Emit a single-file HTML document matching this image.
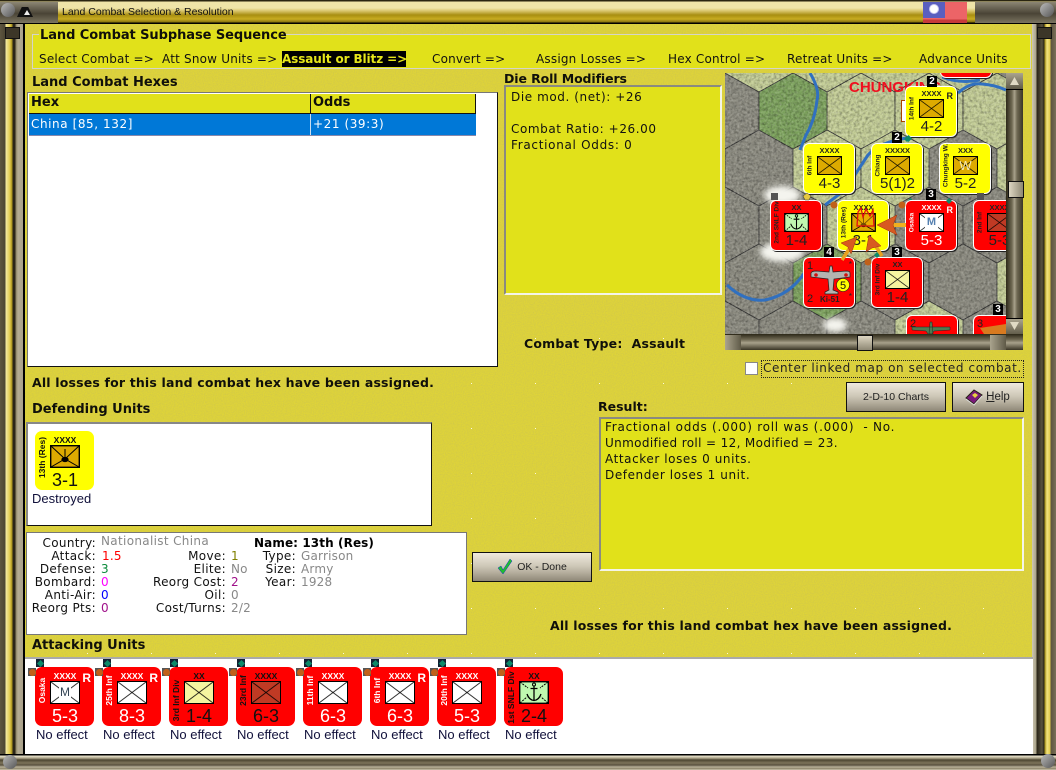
<!DOCTYPE html>
<html><head><meta charset="utf-8"><title>Land Combat Selection &amp; Resolution</title>
<style>
html,body{margin:0;padding:0}
body{width:1056px;height:770px;position:relative;overflow:hidden;background:#dccf3c;font-family:"DejaVu Sans",sans-serif;font-size:12px;color:#111}
.a,.t,.b{position:absolute}
.t{white-space:nowrap;line-height:16px;height:16px;letter-spacing:.2px}
.s{letter-spacing:.33px}
.p{letter-spacing:.58px}
.b{font-weight:bold;white-space:nowrap;line-height:16px;height:16px;font-size:12.5px;color:#10100a}
.r{text-align:right}
.sans{font-family:"Liberation Sans",sans-serif}
.panel{position:absolute;background:#e1e11a;box-sizing:border-box}
.u{position:absolute;width:59px;height:59px;border-radius:7px;background:#f00;font-family:"Liberation Sans",sans-serif;color:#fff;overflow:hidden}
.u.y{background:#ff0;color:#111}
.u.k{color:#111}
.u .x{position:absolute;left:15px;top:14px;width:30px;height:23px;box-sizing:border-box;border:1.5px solid #000;background:linear-gradient(to top right,transparent calc(50% - .8px),#000 50%,transparent calc(50% + .8px)),linear-gradient(to bottom right,transparent calc(50% - .8px),#000 50%,transparent calc(50% + .8px)),var(--c,#fff)}
.u .l{position:absolute;left:0;width:60px;text-align:center;top:4px;font-size:8.5px;font-weight:bold;line-height:11px}
.u .v{position:absolute;left:0;width:60px;text-align:center;top:38px;font-size:18px;line-height:22px}
.u .n{position:absolute;left:-22px;top:18px;width:59px;height:11px;line-height:11px;font-size:8.5px;font-weight:bold;text-align:center;transform:rotate(-90deg);white-space:nowrap}
.u .R{position:absolute;right:3px;top:5px;font-size:12px;font-weight:bold;line-height:12px}
.mu{position:absolute;width:50px;height:49px;border-radius:5px;background:#f00;font-family:"Liberation Sans",sans-serif;color:#fff;overflow:hidden;box-shadow:0 0 0 1px #fff,1px 1px 0 1px #222}
.mu.y{background:#ff0;color:#222}
.mu.k{color:#222}
.mu .x{position:absolute;left:13px;top:12px;width:25px;height:19px;box-sizing:border-box;border:1px solid #000;background:linear-gradient(to top right,transparent calc(50% - .7px),#000 50%,transparent calc(50% + .7px)),linear-gradient(to bottom right,transparent calc(50% - .7px),#000 50%,transparent calc(50% + .7px)),var(--c,#fff)}
.mu .l{position:absolute;left:0;width:51px;text-align:center;top:2px;font-size:7.5px;font-weight:bold;line-height:10px}
.mu .v{position:absolute;left:0;width:51px;text-align:center;top:31px;font-size:15px;line-height:18px}
.mu .n{position:absolute;left:-18px;top:17px;width:48px;height:9px;line-height:9px;font-size:6.5px;font-weight:bold;text-align:center;transform:rotate(-90deg);white-space:nowrap}
.mu .R{position:absolute;right:3px;top:4px;font-size:9px;font-weight:bold;line-height:10px}
.gd{position:absolute;width:8px;height:8px;background:#123}
.gd:after{content:"";position:absolute;left:1.5px;top:1.5px;width:5px;height:5px;background:#0c8a6a;transform:rotate(45deg)}
.ob{position:absolute;width:8px;height:8px;background:#555}
.ob:after{content:"";position:absolute;left:.5px;top:.5px;width:7px;height:7px;border-radius:50%;background:#c0601a}
.nb{position:absolute;width:10px;height:11px;background:#000;color:#fff;font:bold 10px/11px "Liberation Sans",sans-serif;text-align:center}
.ne{position:absolute;white-space:nowrap;line-height:16px;font-family:"Liberation Sans",sans-serif;font-size:13px;color:#10103a}
.btn{position:absolute;box-sizing:border-box;border:1px solid #111;background:linear-gradient(#efe9dd,#cfc9b9 45%,#b5ae9d 70%,#8f8878);text-align:center;font-family:"Liberation Sans",sans-serif;font-size:10.5px;color:#222}
.sb{position:absolute;background:#5f5a48}
</style></head>
<body>
<svg width="0" height="0" style="position:absolute">
<defs>
<symbol id="gar" viewBox="0 0 30 23"><rect x=".7" y=".7" width="28.6" height="21.6" fill="#ddaa00" stroke="#000" stroke-width="1.4"/><path d="M1 1 L15 14 L29 1 M1 22 L15 14 L29 22 M15 4 V14" fill="none" stroke="#000"/><ellipse cx="15" cy="14.5" rx="3.6" ry="2.6" fill="#000"/></symbol>
<symbol id="anc" viewBox="0 0 30 23"><rect x=".7" y=".7" width="28.6" height="21.6" fill="#c0f8b0" stroke="#000" stroke-width="1.4"/><path d="M1 1 L9 7 M29 1 L21 7 M1 22 L8 16 M29 22 L22 16" fill="none" stroke="#000" stroke-dasharray="2 1"/><circle cx="15" cy="3.5" r="1.5" fill="none" stroke="#000"/><path d="M15 5 V19 M11.5 7.5 H18.5 M8 13 Q10 19 15 19.5 Q20 19 22 13" fill="none" stroke="#000" stroke-width="1.3"/></symbol>
</defs>
</svg>
<!-- textured background -->
<svg class="a" style="left:0;top:0" width="1056" height="770">
<defs><filter id="gr" x="0" y="0" width="100%" height="100%"><feTurbulence type="fractalNoise" baseFrequency=".9" numOctaves="2" seed="4"/><feColorMatrix values="0 0 0 0 .55  0 0 0 0 .5  0 0 0 0 .1  0 0 0 .9 -.28"/></filter></defs>
<rect width="1056" height="770" fill="#dfd438"/>
<rect width="1056" height="770" filter="url(#gr)"/>
</svg>
<div class="a" style="left:25px;top:24px;width:1007px;height:634px;background-image:linear-gradient(#f8f6d8,#f8f6d8);background-size:1px 1px;background-repeat:no-repeat;opacity:0"></div>
<svg class="a" style="left:25px;top:24px" width="1007" height="634"><defs><pattern id="dots" x="-2" y="-1" width="64" height="45" patternUnits="userSpaceOnUse"><rect x="0" y="0" width="1" height="1" fill="#fbf9e0"/></pattern></defs><rect width="1007" height="634" fill="url(#dots)"/></svg>

<!-- frame -->
<div class="a" style="left:0;top:0;width:25px;height:770px;background:linear-gradient(90deg,#5d5540 0,#4d4632 5px,#f3e9a0 6px,#e0c94c 10px,#a8921c 12px,#2b2618 13px,#2b2618 15px,#8f8668 16px,#b5ad93 18px,#a8a08a 23px,#000 23px)"></div>
<div class="a" style="left:1032px;top:0;width:24px;height:770px;background:linear-gradient(90deg,#cfc9b5 0,#a9a288 4px,#2b2618 5px,#5a5240 10px,#2d2818 12px,#a8921c 13px,#f3e380 15px,#e0c94c 18px,#5d5540 19px,#7a7058 24px)"></div>
<div class="a" style="left:0;top:0;width:1056px;height:24px;background:linear-gradient(#2a2510 0,#2a2510 1px,#efe4a8 2px,#efe4a8 8px,#d8c46a 11px,#a88e10 15px,#c8ac20 19px,#8a7410 22px,#000 23px,#000 24px)"></div>
<div class="a" style="left:0;top:754px;width:1056px;height:16px;background:linear-gradient(#000 0,#000 1px,#e8e2cc 2px,#b3ab90 4px,#4d4632 6px,#7d745a 9px,#5a5240 11px,#b8b098 13px,#8a8268 15px,#e8e2cc 16px)"></div>
<!-- corner caps -->
<div class="a" style="left:0;top:2px;width:58px;height:21px;background:linear-gradient(#8c8674,#4a4436 55%,#7a7460)"></div>
<div class="a" style="left:17px;top:7px;width:16px;height:10px;background:#111;clip-path:polygon(30% 0,70% 0,100% 100%,0 100%)"></div>
<div class="a" style="left:24px;top:10px;width:6px;height:5px;background:#eee;clip-path:polygon(50% 0,100% 100%,0 100%)"></div>
<div class="a" style="left:1px;top:3px;width:14px;height:14px;border-radius:50%;background:linear-gradient(135deg,#bbb,#555)"></div>
<div class="a" style="left:975px;top:2px;width:81px;height:21px;background:linear-gradient(#8c8674,#4a4436 55%,#7a7460)"></div>
<div class="a" style="left:1040px;top:3px;width:14px;height:14px;border-radius:50%;background:linear-gradient(135deg,#bbb,#555)"></div>
<div class="a" style="left:3px;top:755px;width:14px;height:14px;border-radius:50%;background:linear-gradient(135deg,#bbb,#555)"></div>
<div class="a" style="left:1041px;top:754px;width:14px;height:14px;border-radius:50%;background:linear-gradient(135deg,#bbb,#555)"></div>
<div class="a" style="left:5px;top:27px;width:13px;height:10px;background:#3c3628;border:1px solid #111"></div>
<div class="a" style="left:1037px;top:27px;width:13px;height:10px;background:#3c3628;border:1px solid #111"></div>
<div class="t sans" style="left:62px;top:4px;font-size:10.5px;color:#111;letter-spacing:0">Land Combat Selection &amp; Resolution</div>
<!-- flag -->
<div class="a" style="left:923px;top:2px;width:44px;height:21px;background:linear-gradient(#ec6467 0,#ec6467 17px,#c63a3a 18px)"></div>
<div class="a" style="left:923px;top:2px;width:22px;height:16px;background:#5a5fbf"></div>
<div class="a" style="left:930px;top:5px;width:8px;height:8px;border-radius:50%;background:#fff;box-shadow:0 0 0 1px #c8c8f0"></div>

<!-- subphase group -->
<div class="panel" style="left:32px;top:34px;width:999px;height:35px;border:1px solid #d5d5c8"></div>
<div class="a" style="left:39px;top:30px;width:244px;height:10px;background:#e1e11a"></div>
<div class="b" style="left:40px;top:27px;font-size:13px;letter-spacing:-.07px;top:28px">Land Combat Subphase Sequence</div>
<div class="t" style="left:39px;top:51px">Select Combat =&gt;</div>
<div class="t" style="left:162px;top:51px">Att Snow Units =&gt;</div>
<div class="a" style="left:282px;top:51px;width:124px;height:16px;background:#000"></div>
<div class="b" style="left:282px;top:51px;color:#e6e61a;font-size:12px;letter-spacing:-.1px">Assault or Blitz =&gt;</div>
<div class="t" style="left:432px;top:51px">Convert =&gt;</div>
<div class="t" style="left:536px;top:51px">Assign Losses =&gt;</div>
<div class="t" style="left:668px;top:51px">Hex Control =&gt;</div>
<div class="t" style="left:787px;top:51px">Retreat Units =&gt;</div>
<div class="t" style="left:919px;top:51px">Advance Units</div>

<!-- hex list -->
<div class="b" style="left:32px;top:75px;font-size:13px">Land Combat Hexes</div>
<div class="a" style="left:27px;top:92px;width:471px;height:275px;background:#fff;box-sizing:border-box;border:1px solid;border-color:#777 #111 #111 #777"></div>
<div class="a" style="left:29px;top:94px;width:282px;height:20px;box-sizing:border-box;background:#e1e11a;border-right:1px solid #111;border-bottom:1px solid #111"></div>
<div class="a" style="left:311px;top:94px;width:165px;height:20px;box-sizing:border-box;background:#e1e11a;border-right:1px solid #111;border-bottom:1px solid #111"></div>
<div class="b" style="left:31px;top:95px;font-size:13px">Hex</div>
<div class="b" style="left:313px;top:95px;font-size:13px">Odds</div>
<div class="a" style="left:29px;top:114px;width:447px;height:21px;background:#0078d7;border-bottom:1px solid #88a"></div>
<div class="a" style="left:310px;top:114px;width:1px;height:21px;background:#cde"></div>
<div class="t p" style="left:31px;top:116px;color:#fff">China [85, 132]</div>
<div class="t p" style="left:313px;top:116px;color:#fff">+21 (39:3)</div>

<!-- die roll -->
<div class="b" style="left:504px;top:71px;font-size:12.5px;letter-spacing:-.1px">Die Roll Modifiers</div>
<div class="panel" style="left:504px;top:85px;width:218px;height:210px;border:2px solid;border-color:#8a8a80 #f4f4e8 #f4f4e8 #8a8a80"></div>
<div class="t p" style="left:511px;top:89px">Die mod. (net): +26</div>
<div class="t p" style="left:511px;top:121px">Combat Ratio: +26.00</div>
<div class="t p" style="left:511px;top:137px;letter-spacing:.7px">Fractional Odds: 0</div>
<div class="b" style="left:524px;top:336px;letter-spacing:.2px">Combat Type:&nbsp; Assault</div>

<!-- map -->
<div class="a" style="left:725px;top:73px;width:281px;height:261px;overflow:hidden;background:#8a897e">
<svg class="a" style="left:0;top:0" width="281" height="261" viewBox="725 73 281 261">
<defs>
<filter id="nz" x="0" y="0" width="100%" height="100%"><feTurbulence type="fractalNoise" baseFrequency=".35" numOctaves="3" seed="9"/><feColorMatrix values="0 0 0 0 0  0 0 0 0 0  0 0 0 0 0  .9 .9 0 0 -.75"/></filter>
<filter id="nw" x="0" y="0" width="100%" height="100%"><feTurbulence type="fractalNoise" baseFrequency=".5" numOctaves="3" seed="3"/><feColorMatrix values="0 0 0 0 1  0 0 0 0 1  0 0 0 0 .95  0 .9 .9 0 -.72"/></filter>
<filter id="bl"><feGaussianBlur stdDeviation="3"/></filter>
<symbol id="h" overflow="visible"><polygon points="0,-38 34,-19 34,19 0,38 -34,19 -34,-19"/></symbol>
</defs>
<g stroke="#333" stroke-width=".8">
<g fill="#8a897e">
<use href="#h" x="725" y="111"/><use href="#h" x="759" y="168"/><use href="#h" x="725" y="225"/><use href="#h" x="793" y="225"/><use href="#h" x="929" y="225"/><use href="#h" x="997" y="225"/><use href="#h" x="759" y="282"/><use href="#h" x="895" y="282"/><use href="#h" x="963" y="282"/><use href="#h" x="963" y="168"/><use href="#h" x="725" y="339"/><use href="#h" x="793" y="339"/><use href="#h" x="861" y="339"/><use href="#h" x="997" y="339"/>
</g>
<g fill="#c3cd95">
<use href="#h" x="861" y="111"/><use href="#h" x="929" y="111"/><use href="#h" x="997" y="111"/><use href="#h" x="827" y="168"/><use href="#h" x="895" y="168"/><use href="#h" x="1031" y="168"/><use href="#h" x="861" y="225"/><use href="#h" x="1031" y="282"/><use href="#h" x="929" y="339"/><use href="#h" x="759" y="54"/><use href="#h" x="827" y="54"/><use href="#h" x="895" y="54"/><use href="#h" x="963" y="54"/>
</g>
<g fill="#7aa05a">
<use href="#h" x="793" y="111"/><use href="#h" x="827" y="282"/>
</g>
</g>
<rect x="725" y="73" width="281" height="261" filter="url(#nz)" opacity=".5"/>
<rect x="725" y="73" width="281" height="261" filter="url(#nw)" opacity=".35"/>
<g fill="#f4f4ee" filter="url(#bl)"><ellipse cx="782" cy="195" rx="18" ry="9"/><ellipse cx="782" cy="252" rx="22" ry="10"/><ellipse cx="835" cy="325" rx="12" ry="7"/></g>
<g fill="none" stroke="#3070c0" stroke-width="3">
<path d="M810 73 Q820 90 817 100 Q815 120 806 135 L800 150"/>
<path d="M907 138 Q880 142 868 155 Q858 170 845 190 L825 205"/>
<path d="M727 285 Q745 302 765 300 Q790 295 805 272"/>
<path d="M958 93 Q970 82 982 84 Q995 85 1006 90"/>
<path d="M942 77 Q960 84 980 80"/>
</g>
</svg>
<div class="t sans" style="left:124px;top:7px;font-size:15px;font-weight:bold;color:#f01020;letter-spacing:0">CHUNGKING</div>
</div>
<div class="a" style="left:725px;top:73px;width:281px;height:261px;overflow:hidden">
<div class="mu" style="left:216px;top:-45px"></div>
<div class="a" style="left:176px;top:27px;width:7px;height:20px;background:#fff;border:1px solid #a40"></div>
<div class="mu y k" style="left:181px;top:14px"><div class="l">XXXX</div><div class="x" style="--c:#ddaa00"></div><div class="v">4-2</div><div class="n">14th Inf</div><div class="R" style="color:#222">R</div></div>
<div class="nb" style="left:202px;top:3px">2</div>
<div class="mu y k" style="left:79px;top:71px"><div class="l">XXXX</div><div class="x" style="--c:#ddaa00"></div><div class="v">4-3</div><div class="n">6th Inf</div></div>
<div class="mu y k" style="left:147px;top:71px"><div class="l">XXXXX</div><div class="x" style="--c:#ddaa00"></div><div class="v">5(1)2</div><div class="n">Chiang</div></div>
<div class="mu y k" style="left:215px;top:71px"><div class="l">XXX</div><div class="x" style="--c:#ddaa00"></div><div class="v">5-2</div><div class="n">Chungking W.</div><div class="a" style="left:13px;top:14px;width:25px;text-align:center;color:#f4e8b0;font-size:13px;line-height:16px">W</div></div>
<div class="nb" style="left:167px;top:59px">2</div>
<div class="gd" style="left:179px;top:61px;background:none"></div>
<div class="gd" style="left:181px;top:124px;background:none"></div>
<div class="mu k" style="left:46px;top:128px"><div class="l">XX</div><svg class="a" style="left:13px;top:12px" width="25" height="19"><use href="#anc" width="25" height="19"/></svg><div class="v">1-4</div><div class="n">2nd SNLF Div</div></div>
<div class="mu y k" style="left:113px;top:128px"><div class="l">XXXX</div><svg class="a" style="left:13px;top:12px" width="25" height="19"><use href="#gar" width="25" height="19"/></svg><div class="v">3-1</div><div class="n">13th (Res)</div></div>
<div class="mu" style="left:181px;top:128px"><div class="l">XXXX</div><div class="x" style="--c:#fff"></div><div class="v">5-3</div><div class="n">Osaka</div><div class="R">R</div><div class="a" style="left:19px;top:16px;width:13px;height:11px;background:#fff;text-align:center;color:#5580b0;font-size:11px;line-height:11px;font-weight:bold">M</div></div>
<div class="mu k" style="left:249px;top:128px"><div class="l">XXXX</div><div class="x" style="--c:#c03a24"></div><div class="v">5-3</div><div class="n">2nd Inf</div></div>
<div class="nb" style="left:201px;top:116px">3</div>
<div class="nb" style="left:99px;top:174px">4</div>
<div class="nb" style="left:167px;top:174px">3</div>
<div class="mu k" style="left:79px;top:185px"><div class="a sans" style="left:3px;top:2px;font-size:11px">1</div><div class="a sans" style="left:3px;top:35px;font-size:11px">2</div><div class="a sans" style="left:16px;top:37px;font-size:8px;font-weight:bold">Ki-51</div><div class="a sans" style="right:2px;top:2px;font-size:8px">*</div><div class="a sans" style="right:2px;top:34px;font-size:8px">*</div></div>
<div class="mu k" style="left:147px;top:185px"><div class="l">XX</div><div class="x" style="--c:#f5f5a0"></div><div class="v">1-4</div><div class="n">3rd Inf Div</div></div>
<div class="mu k" style="left:182px;top:243px"><div class="a sans" style="left:3px;top:2px;font-size:11px">2</div></div>
<div class="mu k" style="left:249px;top:243px"><div class="a sans" style="left:3px;top:2px;font-size:11px">3</div></div>
<div class="nb" style="left:268px;top:231px">3</div>
<svg class="a" style="left:0;top:0" width="281" height="261" viewBox="725 73 281 261">
<!-- plane -->
<g stroke="#222" stroke-width=".7"><path d="M811 273 Q812 271 816 271 L829 272 L830 266 L832 266 L833 272 L846 271 Q850 271 850 273 L850 277 L834 279 L833 290 L838 292 L838 294 L825 294 L825 292 L829 290 L828 279 L811 277Z" fill="#b4b4b0"/></g>
<circle cx="816" cy="275" r="1.8" fill="#d01010"/><circle cx="846" cy="275" r="1.8" fill="#d01010"/>
<circle cx="843" cy="285" r="6.5" fill="#ff0" stroke="#222" stroke-width=".6"/>
<text x="843" y="289" font-family="Liberation Sans" font-size="11" text-anchor="middle" fill="#111">5</text>
<!-- planes at bottom -->
<path d="M912 327 L950 327 L950 330 L934 331 L932 334 L928 334 L926 331 L912 330Z M930 322 L932 322 L933 334 L929 334Z" fill="#4f7a50" stroke="#222" stroke-width=".5"/>
<path d="M980 328 L1006 324 L1006 334 L984 334Z" fill="#d87a20"/>
<!-- markers -->
<path d="M949 198 l3 3 -3 3 -3 -3z" fill="#0c8a6a"/>
<path d="M907 136 l3 3 -3 3 -3 -3z" fill="#0c8a6a"/>
<path d="M877 252 l3 3 -3 3 -3 -3z" fill="#0c8a6a"/>
<circle cx="834" cy="205" r="3.5" fill="#c0601a"/><circle cx="902" cy="205" r="3.5" fill="#c0601a"/><circle cx="868" cy="262" r="3.5" fill="#c0601a"/>
<rect x="771" y="193" width="7" height="7" fill="#555"/><rect x="977" y="193" width="7" height="7" fill="#555"/>
<path d="M807 193 l4 3 -2 4 h-4 l-2 -4z" fill="#e6c840" stroke="#333" stroke-width=".5"/>
<!-- fire -->
<path d="M857 226 L858 212 L861 208 L863 217 L866 209 L870 216 L873 210 L874 226 Z" fill="#ffb000" fill-opacity=".45" stroke="#e01010" stroke-width="1.3"/>
<!-- arrows -->
<path d="M893 223 H906 V227 H893Z" fill="#f0b020"/>
<path d="M877 225 L897 215 L893 225 L897 235Z" fill="#d85a20" stroke="#a03010" stroke-width=".5"/>
<path d="M842 260 L851 246" stroke="#e8a020" stroke-width="3.5"/>
<path d="M857 237 L841 243 L848 247 L851 254Z" fill="#d85a20" stroke="#a03010" stroke-width=".5"/>
<path d="M882 256 L875 245" stroke="#e8a020" stroke-width="3.5"/>
<path d="M869 235 L866 252 L872 248 L881 246Z" fill="#d85a20" stroke="#a03010" stroke-width=".5"/>
</svg>
</div>
<!-- scrollbars -->
<div class="sb" style="left:1006px;top:73px;width:17px;height:261px;background:linear-gradient(90deg,#2c2818,#6f6953 35%,#a8a18b 50%,#6f6953 65%,#3a3526)"></div>
<div class="a" style="left:1006px;top:73px;width:17px;height:16px;background:linear-gradient(#aaa48e,#5f5a48);border-bottom:1px solid #000"></div>
<div class="a" style="left:1010px;top:77px;width:9px;height:8px;background:#e0dac4;clip-path:polygon(50% 0,100% 100%,0 100%)"></div>
<div class="a" style="left:1006px;top:318px;width:17px;height:16px;background:linear-gradient(#aaa48e,#5f5a48);border-top:1px solid #000"></div>
<div class="a" style="left:1010px;top:322px;width:9px;height:8px;background:#e0dac4;clip-path:polygon(0 0,100% 0,50% 100%)"></div>
<div class="a" style="left:1008px;top:181px;width:14px;height:15px;background:linear-gradient(90deg,#ddd6c2,#8e8874);border:1px solid #111"></div>
<div class="sb" style="left:725px;top:334px;width:298px;height:16px;background:linear-gradient(#2c2818,#6f6953 35%,#a8a18b 55%,#3a3526)"></div>
<div class="a" style="left:725px;top:335px;width:16px;height:15px;background:linear-gradient(90deg,#aaa48e,#5f5a48)"></div>
<div class="a" style="left:990px;top:335px;width:16px;height:15px;background:linear-gradient(90deg,#aaa48e,#5f5a48)"></div>
<div class="a" style="left:857px;top:335px;width:14px;height:14px;background:linear-gradient(#ddd6c2,#8e8874);border:1px solid #111"></div>

<!-- checkbox -->
<div class="a" style="left:745px;top:362px;width:11px;height:11px;background:#fff;border:1px solid #888"></div>
<div class="a" style="left:761px;top:360px;width:261px;height:16px;border:1px dotted #222"></div>
<div class="t" style="left:763px;top:360px;color:#222;letter-spacing:.6px">Center linked map on selected combat.</div>
<!-- buttons -->
<div class="btn" style="left:846px;top:382px;width:100px;height:30px;line-height:29px">2-D-10 Charts</div>
<div class="btn" style="left:952px;top:382px;width:72px;height:30px;line-height:29px;padding-left:20px;font-size:11.5px"><span style="text-decoration:underline">H</span>elp</div>
<svg class="a" style="left:965px;top:389px" width="18" height="17"><path d="M1 9 L9 1 L17 6 L9 15Z" fill="#7a1a7a" stroke="#221"/><path d="M7 6 l3 -2 3 2 -3 3z" fill="#e8d040"/><path d="M1 10 L9 16 L17 7" fill="none" stroke="#ddd"/></svg>
<div class="btn" style="left:472px;top:552px;width:120px;height:30px;line-height:29px;padding-left:20px">OK - Done</div>
<svg class="a" style="left:497px;top:558px" width="16" height="17"><path d="M1 10 L4 8 L6 12 L13 1 L15 3 L6 16Z" fill="#1fc02c" stroke="#1030c0" stroke-width=".5"/></svg>

<div class="b" style="left:32px;top:375px;font-size:12.5px;letter-spacing:.17px">All losses for this land combat hex have been assigned.</div>

<!-- defending -->
<div class="b" style="left:32px;top:402px;font-size:13px">Defending Units</div>
<div class="a" style="left:26px;top:422px;width:406px;height:104px;box-sizing:border-box;background:#fff;border:1px solid;border-color:#888 #111 #111 #888;border-width:2px 1px 1px 2px"></div>
<div class="u y" style="left:35px;top:431px"><div class="l" style="color:#111">XXXX</div><svg class="a" style="left:15px;top:14px" width="30" height="23"><use href="#gar" width="30" height="23"/></svg><div class="v">3-1</div><div class="n" style="color:#111;top:21px">13th (Res)</div></div>
<div class="ne" style="left:32px;top:491px">Destroyed</div>

<!-- info -->
<div class="a" style="left:26px;top:532px;width:441px;height:103px;box-sizing:border-box;background:#fff;border:1px solid #777"></div>
<div class="t r s" style="right:960px;top:535px">Country:</div><div class="t s" style="left:101px;top:533px;color:#888">Nationalist China</div>
<div class="t r s" style="right:960px;top:548px">Attack:</div><div class="t" style="left:102px;top:548px;color:#f00">1.5</div>
<div class="t r s" style="right:960px;top:561px">Defense:</div><div class="t" style="left:101px;top:561px;color:#0a8a3a">3</div>
<div class="t r s" style="right:960px;top:574px">Bombard:</div><div class="t" style="left:101px;top:574px;color:#f0f">0</div>
<div class="t r s" style="right:960px;top:587px">Anti-Air:</div><div class="t" style="left:101px;top:587px;color:#00f">0</div>
<div class="t r s" style="right:960px;top:600px">Reorg Pts:</div><div class="t" style="left:101px;top:600px;color:#a0108a">0</div>
<div class="t r s" style="right:830px;top:548px">Move:</div><div class="t" style="left:231px;top:548px;color:#808000">1</div>
<div class="t r s" style="right:830px;top:561px">Elite:</div><div class="t" style="left:231px;top:561px;color:#888">No</div>
<div class="t r s" style="right:830px;top:574px">Reorg Cost:</div><div class="t" style="left:231px;top:574px;color:#a0108a">2</div>
<div class="t r s" style="right:830px;top:587px">Oil:</div><div class="t" style="left:231px;top:587px;color:#888">0</div>
<div class="t r s" style="right:830px;top:600px">Cost/Turns:</div><div class="t" style="left:231px;top:600px;color:#888">2/2</div>
<div class="b" style="left:254px;top:535px;color:#000;font-size:12px;letter-spacing:.1px">Name: 13th (Res)</div>
<div class="t r s" style="right:760px;top:548px">Type:</div><div class="t" style="left:301px;top:548px;color:#888">Garrison</div>
<div class="t r s" style="right:760px;top:561px">Size:</div><div class="t" style="left:301px;top:561px;color:#888">Army</div>
<div class="t r s" style="right:760px;top:574px">Year:</div><div class="t" style="left:301px;top:574px;color:#888">1928</div>

<!-- result -->
<div class="b" style="left:598px;top:399px;font-size:12.5px">Result:</div>
<div class="panel" style="left:599px;top:417px;width:425px;height:154px;border:2px solid;border-color:#8a8a80 #f4f4e8 #f4f4e8 #8a8a80"></div>
<div class="t" style="left:605px;top:419px;white-space:pre;letter-spacing:.75px">Fractional odds (.000) roll was (.000)  - No.</div>
<div class="t" style="left:605px;top:435px;letter-spacing:.36px">Unmodified roll = 12, Modified = 23.</div>
<div class="t p" style="left:605px;top:451px">Attacker loses 0 units.</div>
<div class="t p" style="left:605px;top:467px">Defender loses 1 unit.</div>
<div class="b" style="left:550px;top:618px;font-size:12.5px;letter-spacing:.17px">All losses for this land combat hex have been assigned.</div>

<!-- attacking -->
<div class="b" style="left:32px;top:638px;font-size:13px">Attacking Units</div>
<div class="a" style="left:25px;top:657px;width:1008px;height:97px;background:#fff;border-top:2px solid #aaa;box-sizing:border-box"></div>

<div class="u" style="left:35px;top:667px"><div class="l">XXXX</div><div class="x" style="--c:#fff"></div><div class="v">5-3</div><div class="n">Osaka</div><div class="R">R</div><div class="a" style="left:24px;top:18px;width:12px;height:15px;background:#fff;text-align:center;color:#345;font-size:12px;line-height:15px">M</div></div>
<div class="u" style="left:102px;top:667px"><div class="l">XXXX</div><div class="x" style="--c:#fff"></div><div class="v">8-3</div><div class="n">25th Inf</div><div class="R">R</div></div>
<div class="u k" style="left:169px;top:667px"><div class="l">XX</div><div class="x" style="--c:#f5f5a0"></div><div class="v">1-4</div><div class="n" style="top:28px">3rd Inf Div</div></div>
<div class="u k" style="left:236px;top:667px"><div class="l">XXXX</div><div class="x" style="--c:#c03a24"></div><div class="v">6-3</div><div class="n">23rd Inf</div></div>
<div class="u" style="left:303px;top:667px"><div class="l">XXXX</div><div class="x" style="--c:#fff"></div><div class="v">6-3</div><div class="n">11th Inf</div></div>
<div class="u" style="left:370px;top:667px"><div class="l">XXXX</div><div class="x" style="--c:#fff"></div><div class="v">6-3</div><div class="n">6th Inf</div><div class="R">R</div></div>
<div class="u" style="left:437px;top:667px"><div class="l">XXXX</div><div class="x" style="--c:#fff"></div><div class="v">5-3</div><div class="n">20th Inf</div></div>
<div class="u k" style="left:504px;top:667px"><div class="l">XX</div><svg class="a" style="left:15px;top:14px" width="30" height="23"><use href="#anc" width="30" height="23"/></svg><div class="v">2-4</div><div class="n" style="top:25px">1st SNLF Div</div></div>

<div class="ob" style="left:28px;top:668px"></div><div class="gd" style="left:36px;top:659px"></div>
<div class="ob" style="left:95px;top:668px"></div><div class="gd" style="left:103px;top:659px"></div>
<div class="ob" style="left:162px;top:668px"></div><div class="gd" style="left:170px;top:659px"></div>
<div class="ob" style="left:229px;top:668px"></div><div class="gd" style="left:237px;top:659px"></div>
<div class="ob" style="left:296px;top:668px"></div><div class="gd" style="left:304px;top:659px"></div>
<div class="ob" style="left:363px;top:668px"></div><div class="gd" style="left:371px;top:659px"></div>
<div class="ob" style="left:430px;top:668px"></div><div class="gd" style="left:438px;top:659px"></div>
<div class="ob" style="left:497px;top:668px"></div><div class="gd" style="left:505px;top:659px"></div>

<div class="ne" style="left:36px;top:727px">No effect</div>
<div class="ne" style="left:103px;top:727px">No effect</div>
<div class="ne" style="left:170px;top:727px">No effect</div>
<div class="ne" style="left:237px;top:727px">No effect</div>
<div class="ne" style="left:304px;top:727px">No effect</div>
<div class="ne" style="left:371px;top:727px">No effect</div>
<div class="ne" style="left:438px;top:727px">No effect</div>
<div class="ne" style="left:505px;top:727px">No effect</div>
</body></html>
